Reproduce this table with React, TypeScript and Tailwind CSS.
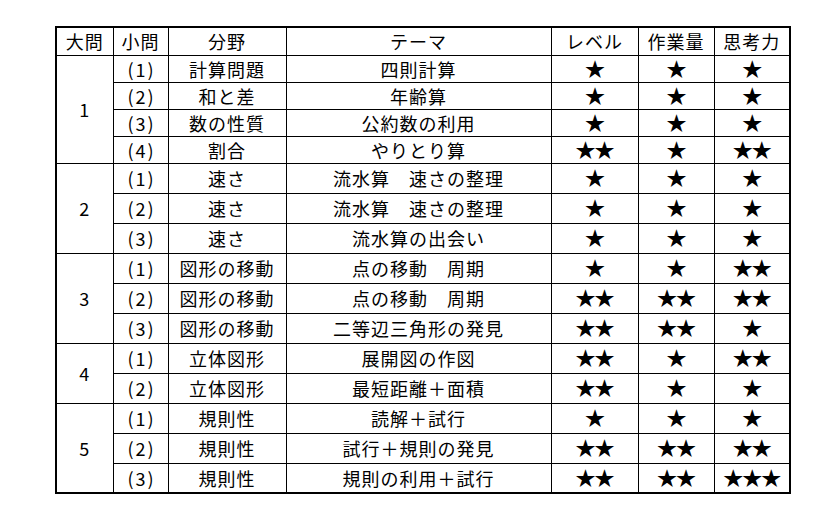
import React from "react"

type Row = { sub: string; field: string; theme: string; level: number; work: number; think: number }

type Group = { no: string; rows: Row[]; h: string }

const groups: Group[] = [
  {
    no: "1",
    h: "h-[27px]",
    rows: [
      { sub: "(1)", field: "計算問題", theme: "四則計算", level: 1, work: 1, think: 1 },
      { sub: "(2)", field: "和と差", theme: "年齢算", level: 1, work: 1, think: 1 },
      { sub: "(3)", field: "数の性質", theme: "公約数の利用", level: 1, work: 1, think: 1 },
      { sub: "(4)", field: "割合", theme: "やりとり算", level: 2, work: 1, think: 2 },
    ],
  },
  {
    no: "2",
    h: "h-[30px]",
    rows: [
      { sub: "(1)", field: "速さ", theme: "流水算　速さの整理", level: 1, work: 1, think: 1 },
      { sub: "(2)", field: "速さ", theme: "流水算　速さの整理", level: 1, work: 1, think: 1 },
      { sub: "(3)", field: "速さ", theme: "流水算の出会い", level: 1, work: 1, think: 1 },
    ],
  },
  {
    no: "3",
    h: "h-[30px]",
    rows: [
      { sub: "(1)", field: "図形の移動", theme: "点の移動　周期", level: 1, work: 1, think: 2 },
      { sub: "(2)", field: "図形の移動", theme: "点の移動　周期", level: 2, work: 2, think: 2 },
      { sub: "(3)", field: "図形の移動", theme: "二等辺三角形の発見", level: 2, work: 2, think: 1 },
    ],
  },
  {
    no: "4",
    h: "h-[30px]",
    rows: [
      { sub: "(1)", field: "立体図形", theme: "展開図の作図", level: 2, work: 1, think: 2 },
      { sub: "(2)", field: "立体図形", theme: "最短距離＋面積", level: 2, work: 1, think: 1 },
    ],
  },
  {
    no: "5",
    h: "h-[30px]",
    rows: [
      { sub: "(1)", field: "規則性", theme: "読解＋試行", level: 1, work: 1, think: 1 },
      { sub: "(2)", field: "規則性", theme: "試行＋規則の発見", level: 2, work: 2, think: 2 },
      { sub: "(3)", field: "規則性", theme: "規則の利用＋試行", level: 2, work: 2, think: 3 },
    ],
  },
]

const stars = (n: number) => "★".repeat(n)

const cell = "border border-black text-center align-middle p-0"
const star = `${cell} tracking-[-1px] text-[20px]`

export default function App() {
  return (
    <div className="w-[824px] h-[523px] bg-white pt-[26px] pl-[55px]">
      <table
        className="border-collapse border-2 border-black text-[18px] leading-none text-black tracking-[1px] table-fixed"
        style={{ fontFamily: '"Noto Sans CJK JP", "Noto Sans", sans-serif' }}
      >
        <colgroup>
          <col className="w-[57px]" />
          <col className="w-[55px]" />
          <col className="w-[118px]" />
          <col className="w-[265px]" />
          <col className="w-[87px]" />
          <col className="w-[76px]" />
          <col className="w-[76px]" />
        </colgroup>
        <thead>
          <tr className="h-[28px]">
            <th className={`${cell} font-normal`}>大問</th>
            <th className={`${cell} font-normal`}>小問</th>
            <th className={`${cell} font-normal`}>分野</th>
            <th className={`${cell} font-normal`}>テーマ</th>
            <th className={`${cell} font-normal`}>レベル</th>
            <th className={`${cell} font-normal`}>作業量</th>
            <th className={`${cell} font-normal`}>思考力</th>
          </tr>
        </thead>
        <tbody>
          {groups.map(g =>
            g.rows.map((r, i) => (
              <tr key={g.no + r.sub} className={g.h}>
                {i === 0 && (
                  <td rowSpan={g.rows.length} className={cell}>
                    {g.no}
                  </td>
                )}
                <td className={`${cell} tracking-[2px] pl-[2px]`}>{r.sub}</td>
                <td className={cell}>{r.field}</td>
                <td className={cell}>{r.theme}</td>
                <td className={star}>{stars(r.level)}</td>
                <td className={star}>{stars(r.work)}</td>
                <td className={star}>{stars(r.think)}</td>
              </tr>
            ))
          )}
        </tbody>
      </table>
    </div>
  )
}
